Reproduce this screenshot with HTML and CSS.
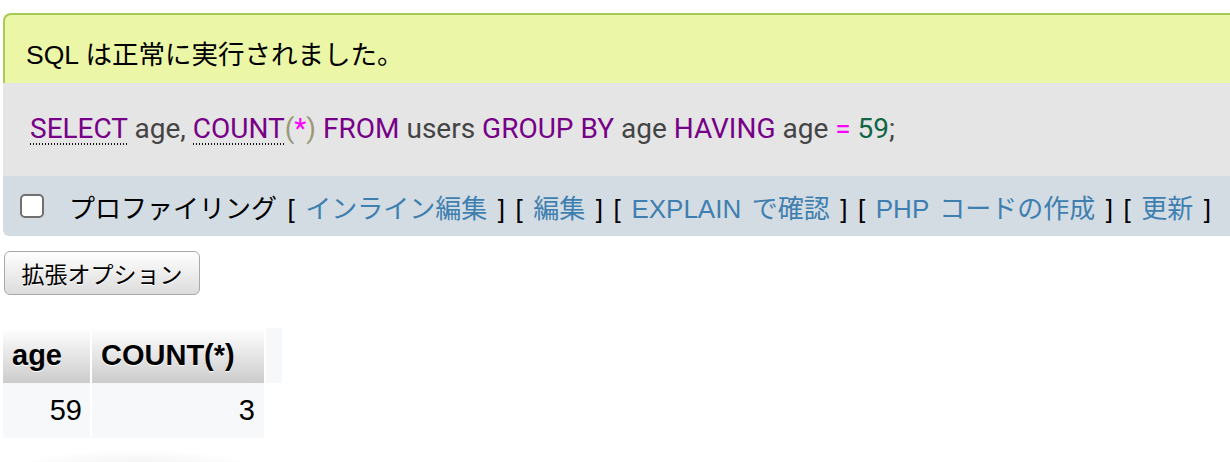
FILE: index.html
```html
<!DOCTYPE html>
<html lang="ja">
<head>
<meta charset="utf-8">
<title>SQL result</title>
<link rel="stylesheet" href="styles.css">
</head>
<body>
<div class="result">
  <div class="success">SQL は正常に実行されました。</div>
  <div class="sql"><span class="kw u">SELECT</span> <span class="id">age</span><span class="id">,</span> <span class="kw u">COUNT</span><span class="br">(</span><span class="op">*</span><span class="br">)</span> <span class="kw">FROM</span> <span class="id">users</span> <span class="kw">GROUP BY</span> <span class="id">age</span> <span class="kw">HAVING</span> <span class="id">age</span> <span class="op">=</span> <span class="num">59</span><span class="id">;</span></div>
  <div class="tools">
    <span class="check"></span>
    <span class="links">プロファイリング [ <a href="#">インライン編集</a> ] [ <a href="#">編集</a> ] [ <a href="#">EXPLAIN で確認</a> ] [ <a href="#">PHP コードの作成</a> ] [ <a href="#">更新</a> ]</span>
  </div>
</div>
<button class="opt" type="button">拡張オプション</button>
<table class="data">
  <thead>
    <tr><th class="c-age">age</th><th class="c-count">COUNT(*)</th><th class="c-extra"></th></tr>
  </thead>
  <tbody>
    <tr><td class="d-age">59</td><td class="d-count">3</td></tr>
  </tbody>
</table>
<div class="shade"></div>
</body>
</html>
```
FILE: styles.css
```css
html, body {
  margin: 0;
  padding: 0;
  background: #fff;
  overflow: hidden;
}
body {
  font-family: "Liberation Sans", "Noto Sans CJK JP", sans-serif;
  color: #000;
}
.result {
  margin: 13px 0 0 3px;
  width: 1250px;
}
.success {
  background: #ebf7a7;
  border-top: 2px solid #a6cc55;
  border-left: 2px solid #a6cc55;
  border-top-left-radius: 8px;
  padding: 25px 0 13px 21px;
  font-size: 26.5px;
  line-height: 30px;
}
.sql {
  background: #e5e5e5;
  padding: 26px 0 27px 27px;
  font-family: Roboto, "Liberation Sans", sans-serif;
  font-size: 28px;
  line-height: 40px;
  color: #444;
  white-space: nowrap;
}
.sql .kw { color: #770088; }
.sql .id { color: #444; }
.sql .br { color: #999977; }
.sql .op { color: #ff00ff; }
.sql .num { color: #116644; }
.sql .u {
  background-image: linear-gradient(to right, #111 50%, transparent 50%);
  background-size: 3px 2px;
  background-repeat: repeat-x;
  background-position: 0 100%;
}
.tools {
  background: #d3dce3;
  height: 60px;
  display: flex;
  align-items: center;
  padding-left: 17px;
  border-bottom-left-radius: 6px;
  font-size: 26px;
  white-space: nowrap;
}
.check {
  width: 20px;
  height: 20px;
  border: 2px solid #707070;
  border-radius: 5px;
  background: #fff;
  margin-right: 25px;
  flex: none;
}
.links {
  word-spacing: 3.3px;
}
.links a {
  color: #3f7fb0;
  text-decoration: none;
}
.opt {
  display: block;
  margin: 15px 0 0 4px;
  width: 196px;
  height: 44px;
  padding: 0;
  border: 1px solid #a9a9a9;
  border-radius: 6px;
  background: linear-gradient(#ffffff, #dcdcdc);
  font-family: "Liberation Sans", "Noto Sans CJK JP", sans-serif;
  font-size: 23px;
  color: #000;
  text-shadow: 0 1px 0 #fff;
}
.data {
  margin: 33px 0 0 1px;
  border-collapse: separate;
  border-spacing: 2px 0;
  font-size: 29px;
}
.data th {
  height: 55px;
  padding: 0 9px;
  text-align: left;
  font-weight: bold;
  background: linear-gradient(#ffffff, #cccccc);
  text-shadow: 0 1px 0 #fff;
  box-sizing: border-box;
}
.data th.c-age { width: 87px; }
.data th.c-count { width: 172px; }
.data th.c-extra {
  width: 16px;
  padding: 0;
  background: #f7f8fa;
}
.data td {
  height: 55px;
  background: #f7f8fa;
  text-align: right;
  box-sizing: border-box;
}
.data td.d-age { padding: 0 8px 0 0; }
.data td.d-count { padding: 0 9px 0 0; }
.shade {
  margin: 12px 0 0 18px;
  width: 236px;
  height: 14px;
  background: radial-gradient(ellipse at 50% 100%, rgba(0, 0, 0, 0.05), rgba(0, 0, 0, 0) 70%);
}
```
